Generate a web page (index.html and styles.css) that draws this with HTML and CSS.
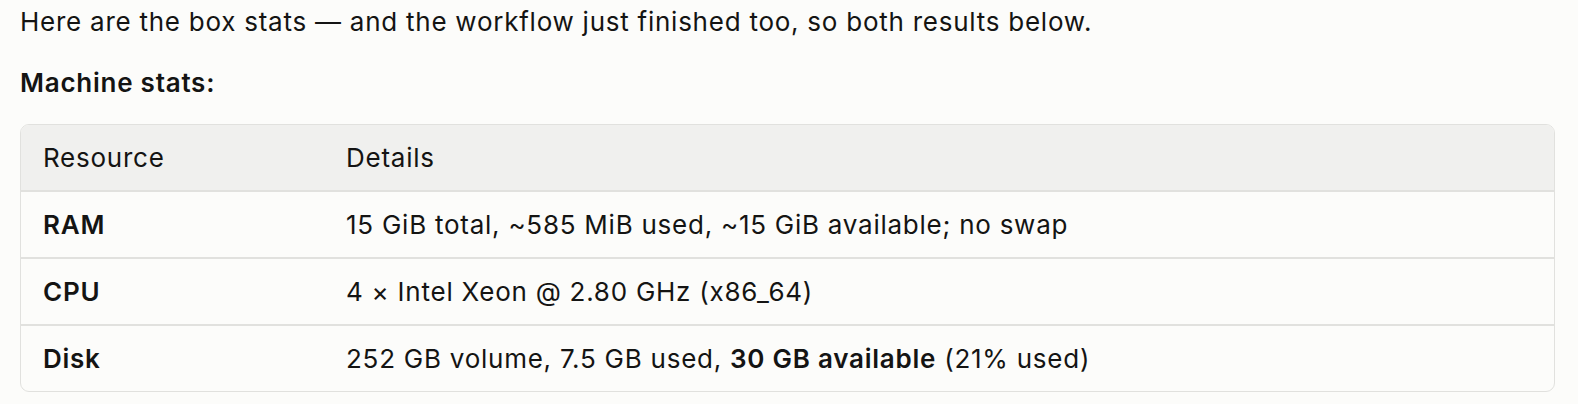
FILE: index.html
```html
<!DOCTYPE html>
<html lang="en">
<head>
    <meta charset="UTF-8">
    <title>Machine stats</title>
    <link rel="stylesheet" href="styles.css">
</head>
<body>
    <div class="message">
        <p>Here are the box stats — and the workflow just finished too, so both results below.</p>
        <p><strong>Machine stats:</strong></p>

        <div class="table-wrap">
            <table class="stats">
                <thead>
                    <tr>
                        <th>Resource</th>
                        <th>Details</th>
                    </tr>
                </thead>
                <tbody>
                    <tr>
                        <td><strong>RAM</strong></td>
                        <td>15 GiB total, ~585 MiB used, ~15 GiB available; no swap</td>
                    </tr>
                    <tr>
                        <td><strong>CPU</strong></td>
                        <td>4 × Intel Xeon @ 2.80 GHz (x86_64)</td>
                    </tr>
                    <tr>
                        <td><strong>Disk</strong></td>
                        <td>252 GB volume, 7.5 GB used, <strong>30 GB available</strong> (21% used)</td>
                    </tr>
                </tbody>
            </table>
        </div>
    </div>
</body>
</html>
```

FILE: styles.css
```css
* {
    margin: 0;
    padding: 0;
    box-sizing: border-box;
}

body {
    font-family: 'Inter', 'Noto Sans', sans-serif;
    font-size: 26px;
    letter-spacing: 0.75px;
    color: #141413;
    background-color: #fcfcfa;
}

.message {
    padding: 2px 23px 0 20px;
}

.message p {
    line-height: 40px;
    margin-bottom: 21px;
}

strong {
    font-weight: 600;
}

.table-wrap {
    border: 1px solid #e1e1de;
    border-radius: 9px;
    overflow: hidden;
}

.stats {
    width: 100%;
    border-collapse: collapse;
}

.stats th,
.stats td {
    text-align: left;
    font-weight: 400;
    line-height: 37px;
    padding: 14px 22px;
    border-bottom: 2px solid #e1e1de;
}

.stats tbody tr:last-child td {
    border-bottom: none;
}

.stats th {
    background-color: #f0f0ee;
}

.stats th:first-child,
.stats td:first-child {
    width: 303px;
}
```
